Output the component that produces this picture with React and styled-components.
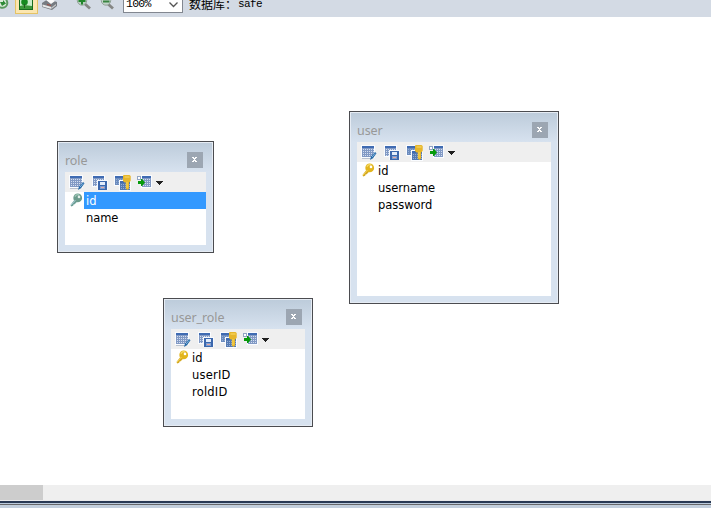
import React from "react";
import styled, { createGlobalStyle } from "styled-components";

const Global = createGlobalStyle`
  * { box-sizing: border-box; }
  body { margin: 0; background: #fff; overflow: hidden; }
`;

const Page = styled.div`
  width: 711px;
  height: 508px;
  display: flex;
  flex-direction: column;
  overflow: hidden;
  background: #fff;
`;

const Toolbar = styled.header`
  height: 17px;
  flex: none;
  display: flex;
  align-items: flex-start;
  background: #d3dae4;
  svg { flex: none; display: block; }
`;

const ToolIcons = styled.div`
  width: 123px;
  height: 17px;
`;

const ZoomSelect = styled.div`
  width: 60px;
  height: 13px;
  display: flex;
  justify-content: space-between;
  padding: 0 3px 0 2px;
  background: #fff;
  border: 1px solid #828790;
  border-top: 0;
  font: 11.5px/8px "Liberation Mono", monospace;
  letter-spacing: -0.75px;
  color: #000;
`;

const DbLabel = styled.div`
  display: flex;
  margin-left: 6px;
  color: #000;
  font: 12px/8px "Noto Sans CJK SC", sans-serif;
  white-space: pre;
  b {
    font: 11px/8px "Liberation Mono", monospace;
    letter-spacing: -0.6px;
    margin-left: 1px;
  }
`;

const Canvas = styled.main`
  position: relative;
  height: 468px;
  flex: none;
`;

const Win = styled.section`
  position: absolute;
  left: ${(p) => p.$x}px;
  top: ${(p) => p.$y}px;
  width: ${(p) => p.$w}px;
  height: ${(p) => p.$h}px;
  display: flex;
  flex-direction: column;
  padding: 0 7px 7px;
  border: 1px solid #4b4c50;
  box-shadow: inset 0 0 0 1px #e6ecf4;
  background: linear-gradient(#bccbda, #d7e2ef 30px);
`;

const TitleBar = styled.div`
  height: 30px;
  flex: none;
  display: flex;
  justify-content: space-between;
  padding: 10px 3px 0 0;
`;

const Title = styled.div`
  font: 12.5px/18px "Noto Sans", sans-serif;
  letter-spacing: -0.1px;
  color: #989898;
`;

const Close = styled.div`
  width: 16px;
  height: 16px;
  background: #9ca6b2;
  svg { display: block; }
`;

const Body = styled.div`
  flex: 1;
  background: #fff;
`;

const Tools = styled.div`
  height: 20px;
  padding-left: 4px;
  background: #efefef;
  svg { display: block; }
`;

const Row = styled.div`
  display: flex;
  height: 17px;
  svg { flex: none; display: block; }
`;

const IconCell = styled.div`
  width: 19px;
  flex: none;
`;

const Field = styled.div`
  flex: 1;
  height: 17px;
  padding: 1px 0 0 2px;
  font: 11.5px/16px "DejaVu Sans", sans-serif;
  letter-spacing: ${(p) => p.$track}px;
  color: ${(p) => (p.$active ? "#fff" : "#000")};
  background: ${(p) => (p.$active ? "#3399ff" : "transparent")};
`;

const ScrollTrack = styled.div`
  height: 15px;
  flex: none;
  background: #efefef;
`;

const ScrollThumb = styled.div`
  width: 43px;
  height: 15px;
  background: #cdcdcd;
`;

const Footer = styled.footer`
  height: 8px;
  flex: none;
  background: linear-gradient(
    #e9e9ea 0 1px, #293955 1px 3px, #bccbdd 3px 4px, #66676a 4px 5px, #c3cfdd 5px
  );
`;

const cells = (w, h) => {
  const out = [];
  for (let y = 0; y < h; y += 2)
    for (let x = 0; x < w; x += 2) out.push([x, y]);
  return out;
};

/* A small data grid with a darker header strip. */
function Grid({ x, y, w = 12, h = 12, body = "#8199c4", head = "#3f6bb2", cell = "#d3def0" }) {
  return (
    <g transform={`translate(${x} ${y})`}>
      <rect x="-1" y="-1" width={w + 2} height={h + 2} fill="#fafcff" />
      <rect width={w} height={h} fill={body} />
      <rect width={w} height="2" fill={head} />
      {cells(w - 1, h - 3).map(([cx, cy]) => (
        <rect key={`${cx}-${cy}`} x={cx + 1} y={cy + 3} width="1" height="1" fill={cell} />
      ))}
    </g>
  );
}

function TableTools() {
  return (
    <svg width="106" height="20" shapeRendering="crispEdges">
      <Grid x={1} y={4} w={12} h={11} />
      <path d="M1 16h9v1H1z" fill="#b9c2cf" />
      <g shapeRendering="auto">
        <path d="M9 18l1-3.5 4-4.5 1.5 1.2-3.5 5z" fill="#2869a6" />
        <path d="M11 15l3-3.5" stroke="#8fc0e6" strokeWidth="0.9" />
      </g>

      <Grid x={24} y={4} w={11} h={10} />
      <path d="M28 8h11v10H28z" fill="#f7f9fc" />
      <path d="M29 9h9v9h-9z" fill="#3c68ad" />
      <path d="M31 10h5v3h-5z" fill="#e3edfb" />
      <path d="M31 14h5v3h-5z" fill="#7fa0d2" />
      <path d="M32 15h3v1h-3z" fill="#e9a9a2" />

      <Grid x={46} y={4} w={10} h={9} body="#6c8bbd" cell="#91aed6" />
      <Grid x={51} y={9} w={10} h={9} body="#5479b2" cell="#94aed5" />
      <g shapeRendering="auto">
        <path d="M54.5 3h6l1.2 1v5l-1.5 1.5H60v6l-1.5 1.5-1.7-1.5v-6h-1.3L54 9V4z" fill="#e6b62b" />
        <path d="M55.5 4.5h5v1h-5z" fill="#fbdc6e" />
        <path d="M57.5 10h1v6h-1z" fill="#f8d75d" />
      </g>

      <Grid x={73} y={4} w={9} h={11} />
      <path d="M68 4h4v4h-4z" fill="#91a5c4" />
      <path d="M69 5h2v2h-2z" fill="#fff" />
      <path d="M69 9h3V7h1l3 3.5-3 3.5h-1v-2h-3z" fill="#069a0b" shapeRendering="auto" />
      <path d="M87 9h7v1h-1v1h-1v1h-1v1h-1v-1h-1v-1h-1v-1h-1z" fill="#202020" />
    </svg>
  );
}

function KeyIcon({ muted }) {
  return (
    <svg width="19" height="17">
      <path
        d="M5.5 13l5-6.5 2.8 2-3.6 3.8-1.2.2-.3 1.3-2 .8z"
        fill={muted ? "#6fa097" : "#d5a921"}
      />
      <circle cx="12.7" cy="5.9" r="4.4" fill={muted ? "#6b9b8c" : "#e2b51d"} />
      <path d="M10 4.8a3 3 0 014.2-1.8" fill="none" stroke={muted ? "#9dc5b4" : "#f5d962"} strokeWidth="1.3" />
      <circle cx="14" cy="4.9" r="1.3" fill={muted ? "#e1eee9" : "#fff"} />
      <path d="M6 13l4.5-5" stroke={muted ? "#a8cbd6" : "#f2d35c"} strokeWidth="1" />
    </svg>
  );
}

function CloseIcon() {
  return (
    <svg width="16" height="16" shapeRendering="crispEdges" fill="#fff">
      <path d="M5 5h2v1h1V5h2v1H9v1H8v1h1v1h1v1H8V9H7v1H5V9h1V8h1V7H6V6H5z" />
    </svg>
  );
}

function TableWindow({ x, y, w, h, name, fields, selected }) {
  return (
    <Win $x={x} $y={y} $w={w} $h={h}>
      <TitleBar>
        <Title>{name}</Title>
        <Close><CloseIcon /></Close>
      </TitleBar>
      <Body>
        <Tools><TableTools /></Tools>
        {fields.map(([field, spacing], i) => (
          <Row key={field}>
            <IconCell>{i === 0 && <KeyIcon muted={selected} />}</IconCell>
            <Field $active={selected && i === 0} $track={spacing}>{field}</Field>
          </Row>
        ))}
      </Body>
    </Win>
  );
}

function MainIcons() {
  return (
    <svg width="123" height="17">
      <circle cx="2.5" cy="3" r="5.8" fill="#5b9a60" />
      <circle cx="2.5" cy="3" r="3.8" fill="#dcebdc" />
      <path d="M0 2h3V0l3 3.5L2 6z" fill="#2e8a37" />
      <rect x="15.5" y="-2" width="22" height="15.5" fill="#fbe6b0" stroke="#e5c365" />
      <rect x="19" y="-2" width="14" height="12" fill="#176b1e" />
      <rect x="20" y="-1" width="12" height="10" fill="#c9edcb" />
      <path d="M20 6l4-1 8 1v3H20z" fill="#3b993b" />
      <circle cx="24.5" cy="2" r="3.3" fill="#168a20" />
      <path d="M24 4h1v4h-1z" fill="#235923" />
      <path d="M42 3l6-4 9 3v4l-5 4-10-3z" fill="#777c82" />
      <path d="M46 0l4-2 5 3-4 3z" fill="#fafafa" />
      <path d="M42.5 4.5l9 2.5v2l-9-2.5z" fill="#e8e8e8" />
      <path d="M52 7l4-3v1.5l-4 3z" fill="#c9c9c9" />
      <path d="M47 4l4 1v1l-4-1z" fill="#a54d43" />
      <path d="M85 4l5 4.5" stroke="#858684" strokeWidth="2.8" />
      <circle cx="82" cy="0.5" r="4.7" fill="#b9cec0" stroke="#91a297" />
      <path d="M81 -2h2v2h2.5v2H83v2.5h-2V2h-2.5V0H81z" fill="#21862b" />
      <path d="M108 4l5 4.5" stroke="#858684" strokeWidth="2.8" />
      <circle cx="106" cy="0.5" r="4.7" fill="#c3d4ca" stroke="#91a297" />
      <path d="M103 0.5h6.5v2H103z" fill="#398441" />
    </svg>
  );
}

export default function App() {
  return (
    <Page>
      <Global />
      <Toolbar>
        <ToolIcons><MainIcons /></ToolIcons>
        <ZoomSelect>
          <span>100%</span>
          <svg width="11" height="10"><path d="M1.5 2.5l4 4 4-4" fill="none" stroke="#555" strokeWidth="1.3" /></svg>
        </ZoomSelect>
        <DbLabel><span>数据库：</span><b>safe</b></DbLabel>
      </Toolbar>
      <Canvas>
        <TableWindow x={57} y={124} w={157} h={112} name="role" selected
          fields={[["id", 0], ["name", -0.1]]} />
        <TableWindow x={349} y={94} w={210} h={193} name="user"
          fields={[["id", 0], ["username", -0.05], ["password", -0.05]]} />
        <TableWindow x={163} y={281} w={150} h={129} name="user_role"
          fields={[["id", 0], ["userID", 0.2], ["roldID", 0.2]]} />
      </Canvas>
      <ScrollTrack><ScrollThumb /></ScrollTrack>
      <Footer />
    </Page>
  );
}
